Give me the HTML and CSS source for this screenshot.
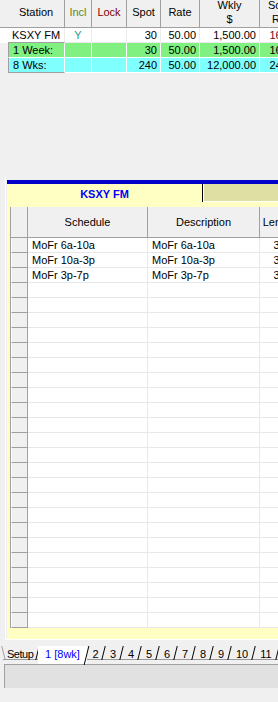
FILE: index.html
```html
<!DOCTYPE html>
<html lang="en">
<head>
    <meta charset="UTF-8" />
    <title>Station Schedule</title>
    <link rel="stylesheet" href="styles.css">
</head>
<body>
<!-- station totals -->
<div class="summary">
    <div class="srow shead">
        <div class="lead"></div>
        <div>Station</div>
        <div class="incl">Incl</div>
        <div class="lock">Lock</div>
        <div>Spot</div>
        <div>Rate</div>
        <div>Wkly<br>$</div>
        <div class="last">Sched<br>Rate</div>
    </div>
    <div class="srow station">
        <div class="lead"></div>
        <div class="txt">KSXY FM</div>
        <div class="yes">Y</div>
        <div></div>
        <div class="num">30</div>
        <div class="num">50.00</div>
        <div class="num">1,500.00</div>
        <div class="num last red">16.00</div>
    </div>
    <div class="srow week">
        <div class="lead"></div>
        <div class="txt boxed">1 Week:</div>
        <div></div>
        <div></div>
        <div class="num">30</div>
        <div class="num">50.00</div>
        <div class="num">1,500.00</div>
        <div class="num last">16.00</div>
    </div>
    <div class="srow total">
        <div class="lead"></div>
        <div class="txt boxed">8 Wks:</div>
        <div></div>
        <div></div>
        <div class="num">240</div>
        <div class="num">50.00</div>
        <div class="num">12,000.00</div>
        <div class="num last">24.00</div>
    </div>
</div>

<!-- schedule sheet -->
<div class="frame">
    <div class="sheet">
        <div class="sheet-tabs">
            <div class="sheet-tab">KSXY FM</div>
            <div class="sheet-rest"></div>
        </div>
        <div class="grid">
            <div class="grow ghead">
                <span class="ind"></span><span>Schedule</span><span>Description</span><span>Length</span>
            </div>
            <div class="grow"><span class="ind"></span><span>MoFr 6a-10a</span><span>MoFr 6a-10a</span><span class="mid">30</span></div>
            <div class="grow"><span class="ind"></span><span>MoFr 10a-3p</span><span>MoFr 10a-3p</span><span class="mid">30</span></div>
            <div class="grow"><span class="ind"></span><span>MoFr 3p-7p</span><span>MoFr 3p-7p</span><span class="mid">30</span></div>
            <div class="grow"><span class="ind"></span><span></span><span></span><span></span></div>
            <div class="grow"><span class="ind"></span><span></span><span></span><span></span></div>
            <div class="grow"><span class="ind"></span><span></span><span></span><span></span></div>
            <div class="grow"><span class="ind"></span><span></span><span></span><span></span></div>
            <div class="grow"><span class="ind"></span><span></span><span></span><span></span></div>
            <div class="grow"><span class="ind"></span><span></span><span></span><span></span></div>
            <div class="grow"><span class="ind"></span><span></span><span></span><span></span></div>
            <div class="grow"><span class="ind"></span><span></span><span></span><span></span></div>
            <div class="grow"><span class="ind"></span><span></span><span></span><span></span></div>
            <div class="grow"><span class="ind"></span><span></span><span></span><span></span></div>
            <div class="grow"><span class="ind"></span><span></span><span></span><span></span></div>
            <div class="grow"><span class="ind"></span><span></span><span></span><span></span></div>
            <div class="grow"><span class="ind"></span><span></span><span></span><span></span></div>
            <div class="grow"><span class="ind"></span><span></span><span></span><span></span></div>
            <div class="grow"><span class="ind"></span><span></span><span></span><span></span></div>
            <div class="grow"><span class="ind"></span><span></span><span></span><span></span></div>
            <div class="grow"><span class="ind"></span><span></span><span></span><span></span></div>
            <div class="grow"><span class="ind"></span><span></span><span></span><span></span></div>
            <div class="grow"><span class="ind"></span><span></span><span></span><span></span></div>
            <div class="grow"><span class="ind"></span><span></span><span></span><span></span></div>
            <div class="grow"><span class="ind"></span><span></span><span></span><span></span></div>
            <div class="grow"><span class="ind"></span><span></span><span></span><span></span></div>
            <div class="grow"><span class="ind"></span><span></span><span></span><span></span></div>
        </div>
    </div>
</div>

<!-- week tabs -->
<div class="weeks">
    <span class="wt w-setup">Setup</span>
    <span class="wt w-main active">1 [8wk]</span>
    <span class="wt w-first">2</span>
    <span class="wt">3</span>
    <span class="wt">4</span>
    <span class="wt">5</span>
    <span class="wt">6</span>
    <span class="wt">7</span>
    <span class="wt">8</span>
    <span class="wt">9</span>
    <span class="wt w-wide">10</span>
    <span class="wt w-wide">11</span>
</div>

<div class="status"></div>
</body>
</html>
```

FILE: styles.css
```css
* {
    box-sizing: border-box;
}
body {
    margin: 0;
    width: 278px;
    height: 702px;
    overflow: hidden;
    background: #f0f0f0;
    font-family: "Liberation Sans", Arial, sans-serif;
    font-size: 11px;
    color: #000;
}

/* top totals grid */
.summary {
    margin-top: -5px;
    width: 278px;
    overflow: hidden;
}
.srow {
    display: grid;
    grid-template-columns: 8px 57px 27px 35px 34px 39px 60px 40px;
    height: 15px;
    width: 300px;
}
.srow > div {
    border-right: 1px solid #fff;
    border-bottom: 1px solid #fff;
    padding: 0 3px;
    line-height: 14px;
    white-space: nowrap;
    text-align: center;
}
.srow .num {
    text-align: right;
}
.srow .txt {
    text-align: left;
    padding-left: 4px;
}
.srow .last {
    padding-right: 2px;
}
.shead {
    height: 33px;
}
.shead > div {
    background: #f0f0f0;
    border-right-color: #a0a0a0;
    border-bottom-color: #a0a0a0;
    display: flex;
    align-items: center;
    justify-content: center;
    line-height: 14px;
    padding-top: 1px;
}
.shead .last {
    justify-content: flex-start;
    padding-left: 8px;
}
.shead .lead {
    border-right: none;
}
.shead .incl {
    color: #5f8a1c;
}
.shead .lock {
    color: #800000;
}
.station > div {
    background: #fff;
    border-right-color: #ebebeb;
    border-bottom-color: #ebebeb;
}
.station .txt {
    border-bottom-color: #a0a0a0;
}
.station .lead {
    border: none;
}
.station .yes {
    color: #2f9a8a;
}
.station .red {
    color: #6a0a2a;
}
.week > div {
    background: #80f080;
}
.total > div {
    background: #80ffff;
}
.srow .lead {
    padding: 0;
}
.week .lead, .total .lead {
    background: #f0f0f0;
    border: none;
}
.boxed {
    border-left: 1px solid #a0a0a0;
}
.total .boxed {
    border-bottom-color: #a0a0a0;
}

/* schedule sheet */
.frame {
    margin: 104px 0 0 5px;
    border-left: 1px solid #fff;
    border-bottom: 1px solid #fff;
    padding: 3px 0 0 1px;
}
.sheet {
    border-top: 4px solid #0000c8;
    background: #ffffc4;
    padding: 0 0 11px 3px;
}
.sheet-tabs {
    display: flex;
    height: 18px;
    margin-left: -3px;
}
.sheet-tab {
    width: 196px;
    border-right: 1px solid #000;
    color: #0000ff;
    font-weight: bold;
    text-align: center;
    line-height: 18px;
    padding-top: 1px;
}
.sheet-rest {
    flex: 1;
    background: #dfdfa3;
    border-left: 1px solid #fff;
    border-bottom: 1px solid #fff;
}
.grid {
    margin-top: 5px;
    border-left: 1px solid #a0a0a0;
    overflow: hidden;
}
.grow {
    display: grid;
    grid-template-columns: 17px 120px 112px 40px;
    height: 15px;
    width: 300px;
    background: #fff;
}
.grow > span {
    border-right: 1px solid #e8e8e8;
    border-bottom: 1px solid #e8e8e8;
    padding: 0 4px;
    line-height: 14px;
    white-space: nowrap;
    overflow: hidden;
}
.grow .ind {
    background: #f0f0f0;
    border-right-color: #a0a0a0;
    border-bottom-color: #a0a0a0;
    border-left: 1px solid #fff;
}
.grow .mid {
    text-align: center;
    padding: 0;
}
.ghead {
    height: 31px;
}
.ghead > span {
    background: #f0f0f0;
    border-right-color: #a0a0a0;
    border-bottom-color: #a0a0a0;
    display: flex;
    align-items: center;
    justify-content: center;
}
.ghead .ind {
    border-left: none;
}

/* week tabs */
.weeks {
    display: flex;
    align-items: flex-start;
    height: 24px;
    padding: 6px 0 0 3px;
}
.wt {
    position: relative;
    flex: none;
    width: 18px;
    height: 14px;
    line-height: 14px;
    padding-top: 1px;
    text-align: center;
    border-bottom: 1px solid #9a9a9a;
}
.wt::after {
    content: "";
    position: absolute;
    top: 0;
    bottom: -1px;
    right: 0;
    border-right: 1px solid #000;
    transform: skewX(-14deg);
}
.w-setup {
    width: 35px;
    text-align: left;
    padding-left: 4px;
    letter-spacing: -0.5px;
}
.w-setup::before {
    content: "";
    position: absolute;
    top: 0;
    bottom: -1px;
    left: 0;
    border-left: 1px solid #a0a0a0;
    transform: skewX(14deg);
}
.w-main {
    width: 49px;
}
.w-first {
    width: 17px;
}
.w-wide {
    width: 24px;
}
.active {
    color: #0000ff;
    background: #fff;
    height: 18px;
    border-bottom: none;
}

.status {
    height: 24px;
    margin-left: 4px;
    background: #e1e1e1;
    border-top: 1px solid #a0a0a0;
    border-left: 1px solid #a0a0a0;
}
```
